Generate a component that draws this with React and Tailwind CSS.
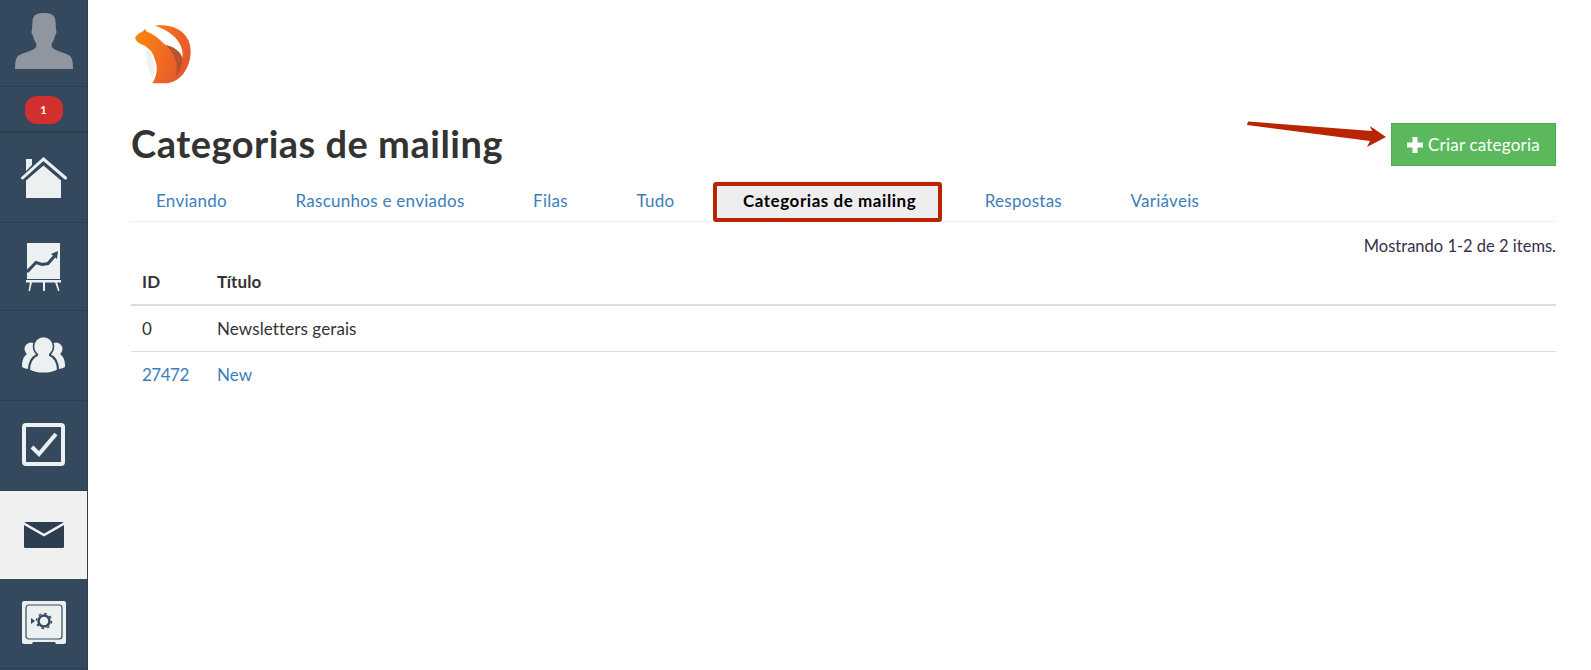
import React from "react";

const Avatar = () => (
  <svg width="58" height="56" viewBox="0 0 58 56">
    <path fill="#8f969f" d="M29 0c6 0 11 1.500 11.500 8l.5 9c1 1 .5 4-1 6-.5 3-2 5-3 7-1 3 0 5 2 6 5 3 12 4 16 7 2 1.500 3 6 3 13H0c0-7 1-11.500 3-13 4-3 11-4 16-7 2-1 3-3 2-6-1-2-2.500-4-3-7-1.500-2-2-5-1-6l.5-9C18 1.500 23 0 29 0z" />
  </svg>
);

const Home = () => (
  <svg width="46" height="42" viewBox="0 0 46 42">
    <path fill="#ecf0f1" d="M5 2h6v6l-6 6z" />
    <path fill="none" stroke="#ecf0f1" strokeWidth="3" strokeLinecap="round" d="M1.500 21 22.500 2 44.500 21" />
    <path fill="#ecf0f1" d="M5 23.500 22.500 8.500 40 23.500V41H5z" />
  </svg>
);

const Chart = () => (
  <svg width="36" height="50" viewBox="0 0 36 50">
    <path fill="#ecf0f1" d="M1 1h33v36H1z" />
    <path fill="#ecf0f1" d="M0 38h35v2.500H0z" />
    <path fill="#ecf0f1" d="M4 40h2L4 49H2.500zM17 40h2v9h-2zM29 40h2l2.500 9H32z" />
    <path fill="none" stroke="#34495e" strokeWidth="3" d="M1 30 10 20.500l6 2 6-1 7-8" />
    <path fill="#34495e" d="M32 9l-1 8-6-5z" />
  </svg>
);

const People = () => (
  <svg width="43" height="38" viewBox="0 0 43 38">
    <circle cx="9" cy="13" r="6.500" fill="#ecf0f1" />
    <circle cx="34" cy="13" r="6.500" fill="#ecf0f1" />
    <path fill="#ecf0f1" d="M0 31c0-6 1-10 5-13h33c4 3 5 7 5 13-2 1-4 2-7 2H7c-3 0-5-1-7-2z" />
    <path fill="#ecf0f1" stroke="#34495e" strokeWidth="2" d="M7 34c0-7 2-12 8-15h13c6 3 8 8 8 15-3 2-8 3.500-14.500 3.500S10 36 7 34z" />
    <circle cx="21.500" cy="10.500" r="10" fill="#ecf0f1" stroke="#34495e" strokeWidth="1.500" />
    <path fill="#ecf0f1" d="M16 17h11v5H16z" />
  </svg>
);

const Check = () => (
  <svg width="43" height="43" viewBox="0 0 43 43">
    <rect x="2" y="2" width="39" height="39" rx="2" fill="none" stroke="#ecf0f1" strokeWidth="4" />
    <path fill="none" stroke="#ecf0f1" strokeWidth="4" d="M10 24l7 7L34 11" />
  </svg>
);

const Mail = () => (
  <svg width="42" height="27" viewBox="0 0 42 27">
    <rect x="1" y="0" width="40" height="26" rx="1.500" fill="#2c3e50" />
    <path fill="none" stroke="#f0f0f0" strokeWidth="2.500" d="M0 1 21 13 42 1" />
  </svg>
);

const Safe = () => (
  <svg width="44" height="43" viewBox="0 0 44 43">
    <path fill="#ecf0f1" d="M2 0h40a2 2 0 0 1 2 2v39a2 2 0 0 1-2 2H34l-1-2H11l-1 2H2a2 2 0 0 1-2-2V2a2 2 0 0 1 2-2z" />
    <rect x="4" y="4" width="36" height="34" rx="3" fill="none" stroke="#34495e" strokeWidth="1.200" />
    <circle cx="22" cy="20" r="5.500" fill="none" stroke="#34495e" strokeWidth="2.500" />
    <circle cx="22" cy="20" r="7.500" fill="none" stroke="#34495e" strokeWidth="1.500" strokeDasharray="2.500 3.390" />
    <path fill="#34495e" d="M9 17l4 3-4 3z" />
  </svg>
);

const Logo = () => (
  <svg width="60" height="64" viewBox="24 24 180 192">
    <defs>
      <linearGradient id="o" x1="0" y1="0" x2="1" y2="0.400">
        <stop offset="0" stopColor="#ff8a0c" />
        <stop offset="1" stopColor="#e5582d" />
      </linearGradient>
    </defs>
    <path fill="#f0f1f2" d="M66 92C60 120 68 160 82 192 92 165 90 130 66 92z" />
    <path fill="url(#o)" d="M30 68C36 58 45 52 52 50L60 42 66 50C90 58 108 78 122 90 150 96 168 112 172 130 178 100 160 55 90 32 150 25 198 55 197 110 196 165 160 205 120 205H82C95 185 100 160 90 135 84 112 72 98 54 90 40 84 32 78 30 68z" />
    <path fill="#a9502c" opacity="0.8" d="M122 90C150 96 168 112 172 130 172 150 165 170 152 185 162 150 150 115 122 90z" />
  </svg>
);

const Arrow = () => (
  <svg width="142" height="32" viewBox="0 0 142 32" className="absolute left-[-145px] top-[-6px]">
    <path fill="#b92500" d="M2 4.500 126 14 124 9 140 20 121 30 124 24 1 8z" />
  </svg>
);

const sideItem = "flex items-center justify-center border-b border-[#2c3e50]";

const tabs = [
  ["Enviando", false],
  ["Rascunhos e enviados", false],
  ["Filas", false],
  ["Tudo", false],
  ["Categorias de mailing", true],
  ["Respostas", false],
  ["Variáveis", false],
];

export default function App() {
  return (
    <div className="flex min-h-[670px] bg-white text-[17px] tracking-[0.1px] text-[#333333] font-['Lato','Open_Sans',sans-serif]">
      <aside className="w-[88px] shrink-0 h-[670px] bg-[#34495e] border-r border-[#2c3e50] flex flex-col overflow-hidden">
        <div className={`${sideItem} h-[87px] !items-start pt-[13px]`}><Avatar /></div>
        <div className={`${sideItem} h-[46px] border-b-2 pt-[2px]`}>
          <span className="w-[38px] h-[28px] rounded-[12px] bg-[#d32f2f] text-white text-[11px] font-bold flex items-center justify-center">1</span>
        </div>
        <div className={`${sideItem} h-[90px]`}><Home /></div>
        <div className={`${sideItem} h-[88px]`}><Chart /></div>
        <div className={`${sideItem} h-[90px] pb-[2px]`}><People /></div>
        <div className={`${sideItem} h-[90px] pb-[3px]`}><Check /></div>
        <div className={`${sideItem} h-[88px] bg-[#f0f0f0] !border-b-0`}><Mail /></div>
        <div className={`${sideItem} h-[90px] pb-[2px]`}><Safe /></div>
      </aside>

      <main className="flex-1 min-w-0 pl-[43px] pr-[35px]">
        <div className="pt-[23px] pl-[2px] h-[123px]"><Logo /></div>
        <div className="flex items-start justify-between h-[53px]">
          <h1 className="text-[38px] leading-[40px] tracking-[0.5px] font-bold text-[#333333]">Categorias de mailing</h1>
          <div className="relative">
            <Arrow />
            <button className="h-[43px] w-[165px] bg-[#5cb85c] border border-[#4cae4c] text-white tracking-[0.2px] flex items-center justify-center gap-[5px]">
              <svg width="16" height="16" viewBox="0 0 16 16"><path fill="#fff" d="M5.500 0h5v5.500H16v5h-5.500V16h-5v-5.500H0v-5h5.500z" /></svg>
              Criar categoria
            </button>
          </div>
        </div>
        <nav className="flex items-end h-[46px] border-b border-[#eeeeee] gap-[18.500px] tracking-[0.27px]">
          {tabs.map(([t, active]) => (
            <div key={t} className={active ? "relative h-[40px] px-[25px] bg-[#eeeeee] font-bold tracking-[0.55px] text-black flex items-center" : "h-[40px] px-[25px] text-[#3c7ebb] flex items-center"}>
              {t}
              {active && <span className="absolute top-[1px] bottom-[-1px] left-[-5px] right-[-1px] border-[4px] border-[#b92500] rounded-[3px]" />}
            </div>
          ))}
        </nav>
        <div className="text-right h-[24px] mt-[13px] leading-[22px] text-[16.500px] tracking-normal text-[#3a2f4a]">Mostrando 1-2 de 2 items.</div>
        <table className="w-full border-collapse">
          <thead>
            <tr className="h-[46px] border-b-2 border-[#dddddd]">
              <th className="w-[86px] pl-[11px] text-left font-bold">ID</th>
              <th className="text-left font-bold">Título</th>
            </tr>
          </thead>
          <tbody>
            <tr className="h-[46px] border-b border-[#dddddd]">
              <td className="pl-[11px]">0</td>
              <td>Newsletters gerais</td>
            </tr>
            <tr className="h-[46px] text-[#3c7ebb]">
              <td className="pl-[11px] tracking-[-0.5px]">27472</td>
              <td>New</td>
            </tr>
          </tbody>
        </table>
      </main>
    </div>
  );
}
